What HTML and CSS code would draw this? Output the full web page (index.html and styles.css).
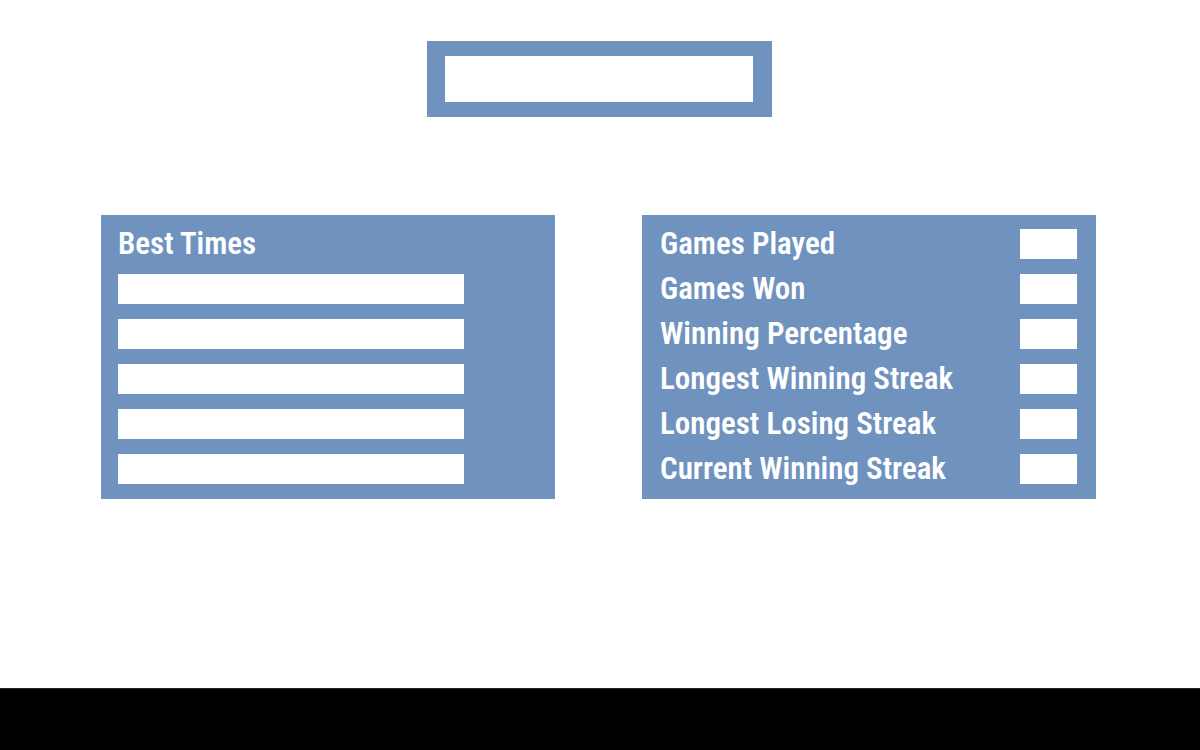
FILE: index.html
```html
<!DOCTYPE html>
<html lang="en">
<head>
<meta charset="utf-8">
<meta name="viewport" content="width=device-width, initial-scale=1">
<title>Statistics</title>
<link rel="stylesheet" href="styles.css">
</head>
<body>
<header class="top">
  <div class="name-panel"><input class="field name-field" type="text" aria-label="Name"></div>
</header>
<main class="panels">
  <section class="panel best">
    <h2 class="label">Best Times</h2>
    <input class="field" type="text" aria-label="Best time 1">
    <input class="field" type="text" aria-label="Best time 2">
    <input class="field" type="text" aria-label="Best time 3">
    <input class="field" type="text" aria-label="Best time 4">
    <input class="field" type="text" aria-label="Best time 5">
  </section>
  <section class="panel stats">
    <div class="row"><label class="label" for="played">Games Played</label><input class="field count" id="played" type="text"></div>
    <div class="row"><label class="label" for="won">Games Won</label><input class="field count" id="won" type="text"></div>
    <div class="row"><label class="label" for="percent">Winning Percentage</label><input class="field count" id="percent" type="text"></div>
    <div class="row"><label class="label" for="longest-win">Longest Winning Streak</label><input class="field count" id="longest-win" type="text"></div>
    <div class="row"><label class="label" for="longest-loss">Longest Losing Streak</label><input class="field count" id="longest-loss" type="text"></div>
    <div class="row"><label class="label" for="current">Current Winning Streak</label><input class="field count" id="current" type="text"></div>
  </section>
</main>
<footer class="footer"></footer>
</body>
</html>
```
FILE: styles.css
```css
* {
  box-sizing: border-box;
}

body {
  margin: 0;
  min-height: 100vh;
  display: flex;
  flex-direction: column;
  background: #fff;
  font-family: "Roboto Condensed", "Liberation Sans Narrow", "Liberation Sans", sans-serif;
}

.top {
  display: flex;
  justify-content: center;
  padding: 41px 1px 98px 0;
}

.name-panel {
  display: flex;
  width: 345px;
  padding: 15px 19px 15px 18px;
  background: #6f92bf;
}

.field {
  display: block;
  width: 100%;
  min-width: 0;
  height: 30px;
  margin: 0;
  padding: 0 8px;
  border: 0;
  border-radius: 0;
  background: #fff;
  color: #6f92bf;
  font: inherit;
  font-size: 20px;
}

.name-field {
  height: 46px;
}

.panels {
  display: grid;
  grid-template-columns: 1fr 1fr;
  gap: 87px;
  padding: 0 104px 48px 101px;
}

.panel {
  display: flex;
  flex-direction: column;
  gap: 15px;
  padding: 14px 19px 15px 18px;
  background: #6f92bf;
}

.best {
  padding-left: 17px;
  padding-right: 91px;
}

.row {
  display: flex;
  align-items: center;
  justify-content: space-between;
}

.label {
  margin: 0;
  color: #fff;
  font-size: 31px;
  font-weight: 600;
  line-height: 30px;
  white-space: nowrap;
}

.count {
  width: 57px;
  flex: none;
}

.footer {
  height: 62px;
  margin-top: auto;
  border-top: 1px solid #222;
  background: #000;
}
```
